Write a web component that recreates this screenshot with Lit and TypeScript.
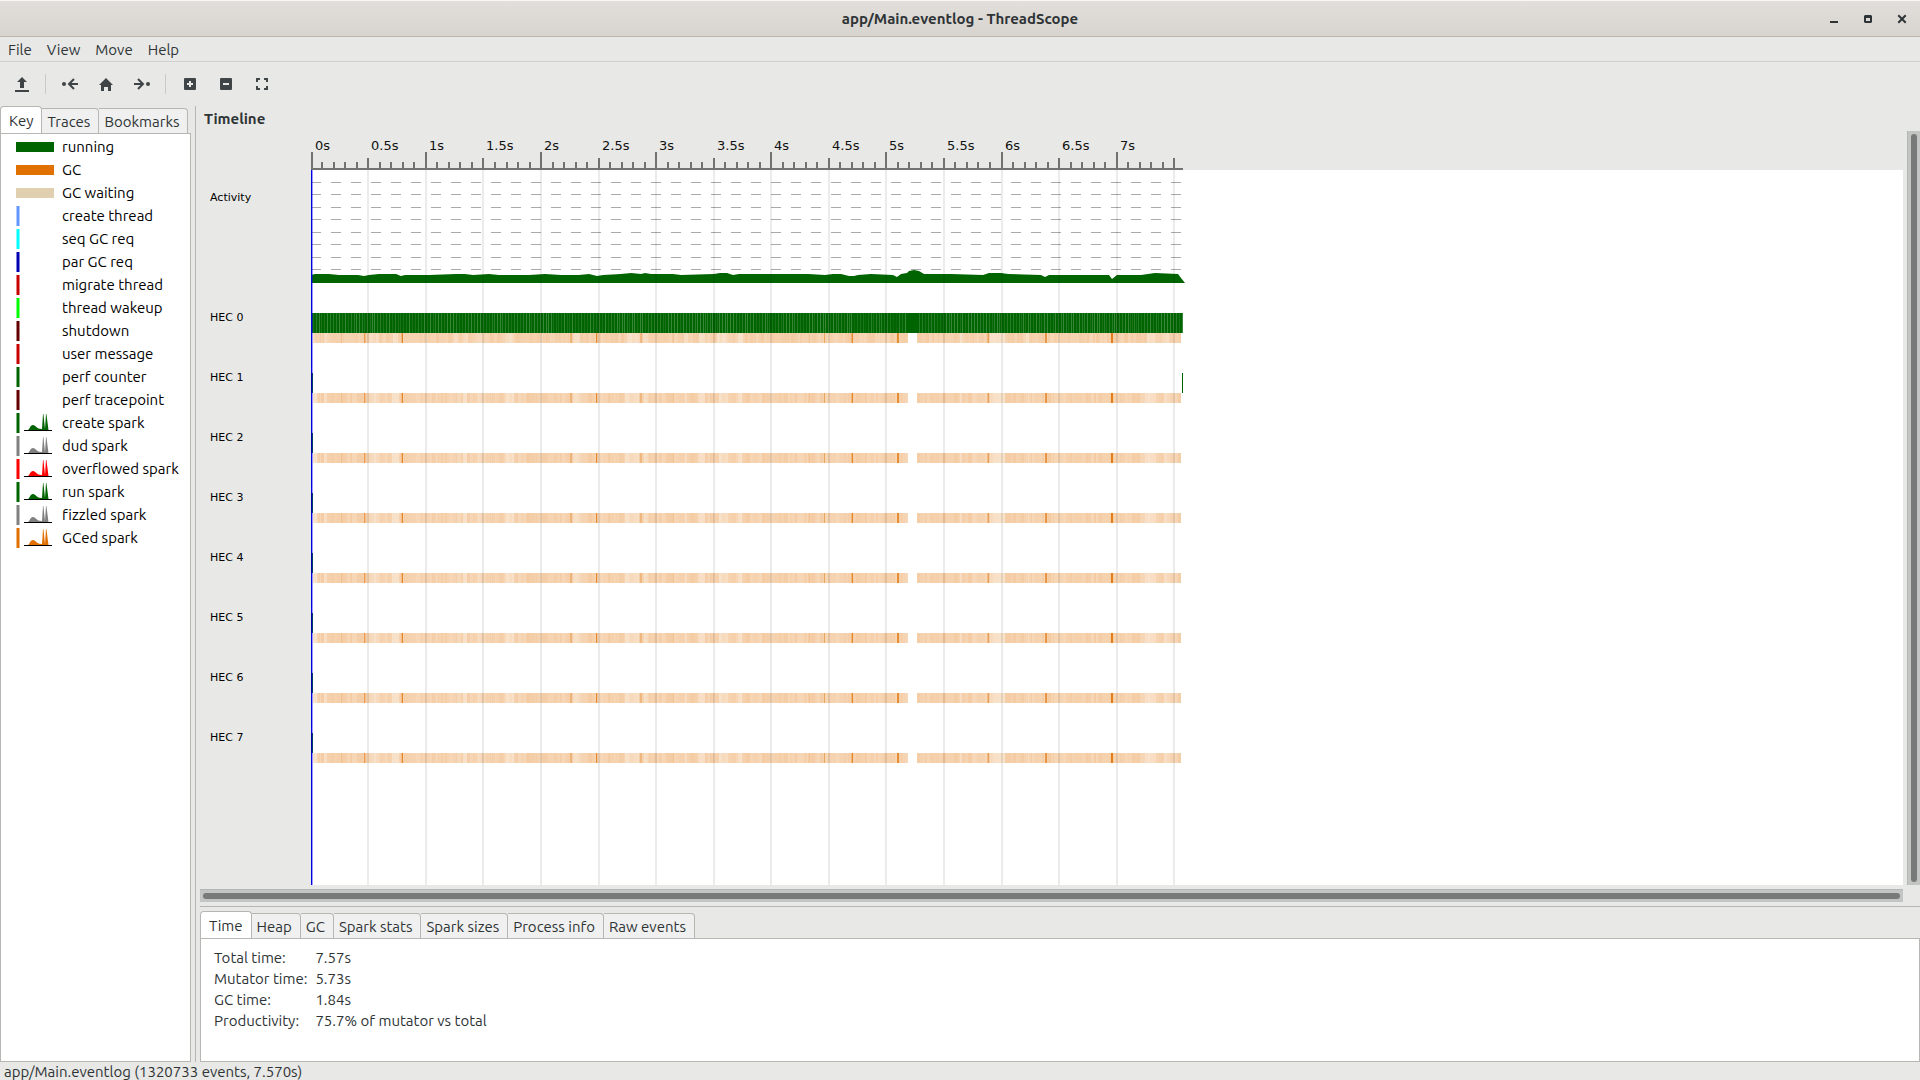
import { LitElement, html, svg, css } from "lit";
import { customElement, state } from "lit/decorators.js";

type KeyKind = "duration" | "instant" | "spark";
interface KeyItem { label: string; color: string; kind: KeyKind; }

const KEY_ITEMS: KeyItem[] = [
  { label: "running", color: "#006400", kind: "duration" },
  { label: "GC", color: "#e07000", kind: "duration" },
  { label: "GC waiting", color: "#e0d0b0", kind: "duration" },
  { label: "create thread", color: "#6496ff", kind: "instant" },
  { label: "seq GC req", color: "#00ffff", kind: "instant" },
  { label: "par GC req", color: "#0000b4", kind: "instant" },
  { label: "migrate thread", color: "#c80000", kind: "instant" },
  { label: "thread wakeup", color: "#00ff00", kind: "instant" },
  { label: "shutdown", color: "#640000", kind: "instant" },
  { label: "user message", color: "#c80000", kind: "instant" },
  { label: "perf counter", color: "#006400", kind: "instant" },
  { label: "perf tracepoint", color: "#640000", kind: "instant" },
  { label: "create spark", color: "#006400", kind: "spark" },
  { label: "dud spark", color: "#808080", kind: "spark" },
  { label: "overflowed spark", color: "#ff0000", kind: "spark" },
  { label: "run spark", color: "#006400", kind: "spark" },
  { label: "fizzled spark", color: "#808080", kind: "spark" },
  { label: "GCed spark", color: "#e07000", kind: "spark" },
];

const STATS: [string, string][] = [
  ["Total time:", "7.57s"],
  ["Mutator time:", "5.73s"],
  ["GC time:", "1.84s"],
  ["Productivity:", "75.7% of mutator vs total"],
];

/* Timeline geometry; x is measured from the left edge of the canvas. */
const TENTH = 11.512;
const END = 872;
const tickX = (tenths: number) => Math.max(0, Math.floor(tenths * TENTH + 0.3) - 1);
const TICKS = Array.from({ length: 76 }, (_, i) => i);
const HECS = Array.from({ length: 8 }, (_, i) => i);

/* Small deterministic generator for the per-pixel load samples. */
const noise = (seed: number) => {
  let s = seed;
  return () => {
    s = (s * 1664525 + 1013904223) % 4294967296;
    return s / 4294967296;
  };
};

/* [start, width, opacity] of collections that stand out from the average. */
const GC_PEAKS: [number, number, number][] = [
  [30, 1, 0.22], [53, 1, 0.55], [54, 1, 0.2], [90, 1, 0.2], [91, 1, 0.8],
  [259, 2, 0.28], [285, 1, 0.75], [286, 1, 0.15], [329, 2, 0.28], [362, 1, 0.12],
  [498, 1, 0.1], [513, 1, 0.45], [540, 1, 0.3], [541, 1, 0.75], [586, 2, 0.7],
  [676, 1, 0.2], [677, 1, 0.5], [734, 2, 0.6], [800, 2, 0.85],
];
const GC_PALE: [number, number][] = [
  [2, 2], [12, 4], [58, 10], [80, 7], [143, 2], [152, 4], [165, 6], [194, 8],
  [262, 6], [314, 14], [331, 6], [372, 4], [386, 8], [406, 10], [427, 4],
  [648, 3], [679, 15], [715, 3], [834, 10], [852, 6],
];

const gcBand = (y: number, seed: number) => {
  const rnd = noise(seed);
  const cells = [];
  for (let x = 2; x < 870; ) {
    const w = 1 + Math.floor(rnd() * 3);
    const pale = GC_PALE.some(([s, n]) => x >= s && x < s + n);
    const a = pale ? 0.2 + rnd() * 0.07 : 0.28 + rnd() * 0.08;
    if (x < 597 || x >= 606) {
      const width = Math.min(w, (x < 597 ? 597 : 870) - x);
      cells.push(svg`<rect x=${x} y=${y} width=${width} height="10" fill-opacity=${a.toFixed(2)}></rect>`);
      x += width;
    } else {
      x = 606;
    }
  }
  return svg`<g fill="#e07000">${cells}${GC_PEAKS.map(
    ([x, w, a]) => svg`<rect x=${x} y=${y} width=${w} height="10" fill-opacity=${a}></rect>`
  )}</g>`;
};

const runStripes = () => {
  const rnd = noise(11);
  const out = [];
  for (let x = 2; x < END; x += rnd() < 0.75 ? 3 : 2) {
    if (x > 594 && x < 607) continue;
    const busy = x > 540 && x < 594;
    const a = (busy ? 0.05 : 0.1) + Math.floor(rnd() * 3) * 0.06;
    out.push(svg`<rect x=${x} y="143" width="1" height="20" fill-opacity=${a.toFixed(2)}></rect>`);
  }
  return svg`<g fill="#ffffff">${out}</g>`;
};

const ACTIVITY =
  "M0 113V105L4 104H18L28 105H47L53 106L58 105L68 104H85L90 106L94 105L118 105L145 104H154L162 105L178 104" +
  "L188 105H218L234 104L250 105L268 105L278 104L286 106L292 105L310 104L320 103L330 104L334 103L340 104L362 104" +
  "L370 105L403 104L409 103H416L422 105L428 104H438L450 104H470L497 104L514 105L522 104L530 104L538 106" +
  "H543L547 105L560 104L582 105L586 107L590 104L596 103L598 101L603 100L608 101L613 104H640L672 105L678 103" +
  "H690L697 104L730 105L734 107L738 105L798 105L801 109L806 105H830L844 103L867 104L870 108L874 113Z";

@customElement("app-root")
export class AppRoot extends LitElement {
  @state() private sideTab = "Key";
  @state() private infoTab = "Time";

  static styles = css`
    :host {
      display: flex;
      flex-direction: column;
      height: 100vh;
      overflow: hidden;
      background: #e8e8e6;
      color: #2e3436;
      font: 15px/20px "Ubuntu", "Noto Sans", sans-serif;
      font-variant-ligatures: none;
    }
    * { box-sizing: border-box; }
    svg { display: block; flex: none; }
    button { font: inherit; color: inherit; border: 0; background: none; padding: 0; margin: 0; }
    .titlebar {
      display: grid;
      grid-template-columns: 1fr auto 1fr;
      align-items: center;
      flex: none;
      height: 37px;
      border-top: 1px solid #f7f7f6;
      border-bottom: 1px solid #bfb4a9;
      background: linear-gradient(#e1dedb, #d8d5d0);
    }
    .title { grid-column: 2; margin: 0; font-size: 15px; font-weight: 700; line-height: 20px; }
    .window-buttons { display: flex; justify-content: flex-end; gap: 18px; padding-right: 10px; }
    .window-buttons button { width: 16px; height: 16px; }
    .menubar {
      display: flex;
      flex: none;
      gap: 15px;
      height: 25px;
      padding: 1px 8px 0;
      border-bottom: 1px solid #d0d0ce;
    }
    .menubar button { line-height: 24px; }
    .toolbar { display: flex; flex: none; align-items: center; height: 44px; padding: 0 4px; }
    .toolbar button { display: grid; place-items: center; width: 36px; height: 36px; }
    .divider { width: 1px; height: 20px; margin: 0 6px 0 5px; background: #c9c9c7; }
    .body { display: flex; flex: 1; min-height: 0; }
    .side { display: flex; flex-direction: column; flex: none; width: 191px; }
    .handle { flex: none; width: 5px; border-right: 1px solid #b6b6b3; }
    .main { display: flex; flex-direction: column; flex: 1; min-width: 0; padding-left: 4px; }
    .tabs { display: flex; flex: none; align-items: flex-end; height: 28px; margin-bottom: -1px; }
    .tabs button {
      height: 26px;
      padding: 2px 8px 0 5px;
      border: 1px solid #b6b6b3;
      border-left-width: 0;
      border-radius: 0 4px 0 0;
      background: #f0f0f0;
      line-height: 22px;
      white-space: nowrap;
    }
    .tabs button.active {
      height: 28px;
      padding: 2px 8px 0;
      border-left-width: 1px;
      border-bottom-color: #ffffff;
      border-radius: 4px 4px 0 0;
      background: #ffffff;
    }
    .page { flex: 1; min-height: 0; border: 1px solid #b6b6b3; background: #ffffff; }
    .keys { margin: 0; padding: 1px 0 0 14px; list-style: none; color: #000000; }
    .keys li { display: flex; align-items: center; gap: 7px; height: 23px; }
    .heading { flex: none; margin: 0; padding: 3px 4px 2px; font-size: 15px; line-height: 20px; }
    .view { display: grid; flex: 1; grid-template-columns: 111px minmax(0, 1fr) 17px; grid-template-rows: 39px minmax(0, 1fr) 21px; min-height: 0; }
    .ruler { grid-column: 2; overflow: hidden; }
    .ruler text { fill: #111111; font: 13px "DejaVu Sans", sans-serif; }
    .labels {
      grid-column: 1;
      grid-row: 2;
      margin: 0;
      padding: 18px 0 0 10px;
      list-style: none;
      color: #000000;
      font: 11px/20px "DejaVu Sans", sans-serif;
    }
    .labels li { height: 60px; }
    .labels .activity { height: 120px; }
    .canvas { grid-column: 2; grid-row: 2; background: #ffffff; overflow: hidden; }
    .vscroll {
      grid-column: 3;
      grid-row: 1 / 3;
      margin-left: 4px;
      padding: 3px;
      border-left: 1px solid #b4b6b5;
      background: #c3c5c4;
    }
    .hscroll {
      grid-column: 1 / 3;
      grid-row: 3;
      align-self: start;
      height: 13px;
      margin-top: 4px;
      padding: 3px;
      border-top: 1px solid #b4b6b5;
      background: #c3c5c4;
    }
    .thumb { width: 100%; height: 100%; border-radius: 3px; background: #777a79; }
    .info { display: flex; flex: none; flex-direction: column; height: 156px; padding-top: 4px; border-top: 1px solid #b6b6b3; }
    .stats { margin: 8px 13px; border-collapse: collapse; }
    .stats th, .stats td { height: 21px; padding: 0; font-weight: 400; line-height: 21px; text-align: left; }
    .stats th { padding-right: 8px; }
    .status { flex: none; height: 18px; padding-left: 4px; line-height: 20px; }
  `;

  private keyIcon(item: KeyItem) {
    if (item.kind === "duration") {
      return html`<svg width="40" height="20" aria-hidden="true">
        <rect x="1" y="5" width="38" height="10" fill=${item.color}></rect>
      </svg>`;
    }
    return html`<svg width="40" height="20" aria-hidden="true">
      <rect x="1" y="0" width="4" height="20" fill=${item.color} fill-opacity="0.5"></rect>
      <rect x="2" y="0" width="2" height="20" fill=${item.color}></rect>
      ${item.kind === "spark"
        ? svg`<path d="M13 17C15 16 15 12 18 12C21 12 21 16 27 16L28 1H28.4L30 16L31 1H31.4L33.5 17Z" fill=${item.color}></path>
            <path d="M9 17.5H37" stroke="#000000"></path>`
        : ""}
    </svg>`;
  }

  private tabs(names: string[], current: string, pick: (n: string) => void) {
    return html`<div class="tabs" role="tablist">
      ${names.map(
        (n) => html`<button role="tab" class=${n === current ? "active" : ""} aria-selected=${n === current ? "true" : "false"} @click=${() => pick(n)}>${n}</button>`
      )}
    </div>`;
  }

  render() {
    return html`
      <header class="titlebar">
        <h1 class="title">app/Main.eventlog - ThreadScope</h1>
        <div class="window-buttons">
          <button aria-label="Minimize"><svg width="16" height="16"><path d="M4 10h8v2H4z" fill="#2e3436"></path></svg></button>
          <button aria-label="Maximize"><svg width="16" height="16"><path d="M5 4h6l1 1v6l-1 1H5l-1-1V5zM6 7v3h4V7z" fill="#2e3436" fill-rule="evenodd"></path></svg></button>
          <button aria-label="Close"><svg width="16" height="16"><path d="M5 5l6 6M11 5l-6 6" stroke="#2e3436" stroke-width="2" stroke-linecap="square"></path></svg></button>
        </div>
      </header>
      <nav class="menubar" aria-label="Application">
        ${["File", "View", "Move", "Help"].map((m) => html`<button>${m}</button>`)}
      </nav>
      <div class="toolbar" role="toolbar" aria-label="Tools">
        <button aria-label="Open"><svg width="16" height="16"><path d="M8 1l5 5h-3v6H6V6H3zM1 14h14v2H1z" fill="#3f4446"></path></svg></button>
        <span class="divider"></span>
        <button aria-label="Previous"><svg width="16" height="16"><circle cx="2" cy="8" r="2" fill="#3f4446"></circle><path d="M16 8H8M12 3L7 8l5 5" fill="none" stroke="#3f4446" stroke-width="2"></path></svg></button>
        <button aria-label="Home"><svg width="16" height="16"><path d="M8 2l7 7h-2v6h-3v-4H6v4H3V9H1z" fill="#3f4446"></path></svg></button>
        <button aria-label="Next"><svg width="16" height="16"><circle cx="14" cy="8" r="2" fill="#3f4446"></circle><path d="M0 8h8M4 3l5 5-5 5" fill="none" stroke="#3f4446" stroke-width="2"></path></svg></button>
        <span class="divider"></span>
        <button aria-label="Zoom in"><svg width="16" height="16"><rect x="2" y="2" width="12" height="12" rx="1" fill="#3f4446"></rect><path d="M8 5v6M5 8h6" stroke="#e8e8e6" stroke-width="2"></path></svg></button>
        <button aria-label="Zoom out"><svg width="16" height="16"><rect x="2" y="2" width="12" height="12" rx="1" fill="#3f4446"></rect><path d="M5 8h6" stroke="#e8e8e6" stroke-width="2"></path></svg></button>
        <button aria-label="Fit to window"><svg width="16" height="16"><path d="M3 6V3h3M10 3h3v3M13 10v3h-3M6 13H3v-3" fill="none" stroke="#3f4446" stroke-width="2"></path></svg></button>
      </div>
      <div class="body">
        <aside class="side">
          ${this.tabs(["Key", "Traces", "Bookmarks"], this.sideTab, (n) => (this.sideTab = n))}
          <div class="page" role="tabpanel">
            <ul class="keys">
              ${KEY_ITEMS.map((k) => html`<li>${this.keyIcon(k)}<span>${k.label}</span></li>`)}
            </ul>
          </div>
        </aside>
        <div class="handle"></div>
        <main class="main">
          <h2 class="heading">Timeline</h2>
          <section class="view" aria-label="Timeline">
            <svg class="ruler" width="100%" height="39">
              <g fill="#727271">
                ${TICKS.map((t) => {
                  const h = t % 10 === 0 ? 16 : t % 5 === 0 ? 10 : 6;
                  return svg`<rect x=${tickX(t)} y=${37 - h} width="2" height=${h}></rect>`;
                })}
                <rect x="0" y="37" width=${END} height="2"></rect>
              </g>
              ${TICKS.filter((t) => t % 5 === 0 && t < 75).map(
                (t) => svg`<text x=${tickX(t) + 4} y="19">${t / 10}s</text>`
              )}
            </svg>
            <ul class="labels">
              <li class="activity">Activity</li>
              ${HECS.map((h) => html`<li>HEC ${h}</li>`)}
            </ul>
            <svg class="canvas" width="100%" height="100%">
              <g stroke="#aaaaaa">
                ${[12, 24, 37, 49, 62, 74, 87, 99].map(
                  (y) => svg`<line x1="0" x2="870" y1=${y + 0.5} y2=${y + 0.5} stroke-dasharray="10 10"></line>`
                )}
              </g>
              <path d=${ACTIVITY} fill="#006400"></path>
              <rect x="0" y="143" width=${END} height="20" fill="#006400"></rect>
              ${runStripes()}
              ${HECS.map((h) => gcBand(163 + h * 60, h === 0 ? 5 : 9))}
              <rect x="871" y="203" width="1" height="20" fill="#006400"></rect>
              <g fill="#000000" fill-opacity="0.08">
                ${TICKS.filter((t) => t > 0 && t % 5 === 0).map(
                  (t) => svg`<rect x=${tickX(t)} y="0" width="2" height="100%"></rect>`
                )}
              </g>
              <rect x="0" y="0" width="1" height="100%" fill="#0000dd"></rect>
              <rect x="1" y="0" width="1" height="100%" fill="#0000ff" fill-opacity="0.4"></rect>
              ${HECS.slice(1).map(
                (h) => svg`<rect x="0" y=${143 + h * 60} width="1" height="20" fill="#0000a8"></rect>
                  <rect x="1" y=${143 + h * 60} width="1" height="20" fill="#003c64"></rect>`
              )}
            </svg>
            <div class="vscroll"><div class="thumb"></div></div>
            <div class="hscroll"><div class="thumb"></div></div>
          </section>
          <section class="info" aria-label="Details">
            ${this.tabs(
              ["Time", "Heap", "GC", "Spark stats", "Spark sizes", "Process info", "Raw events"],
              this.infoTab,
              (n) => (this.infoTab = n)
            )}
            <div class="page" role="tabpanel">
              <table class="stats">
                ${STATS.map(([k, v]) => html`<tr><th scope="row">${k}</th><td>${v}</td></tr>`)}
              </table>
            </div>
          </section>
        </main>
      </div>
      <footer class="status">app/Main.eventlog (1320733 events, 7.570s)</footer>
    `;
  }
}
